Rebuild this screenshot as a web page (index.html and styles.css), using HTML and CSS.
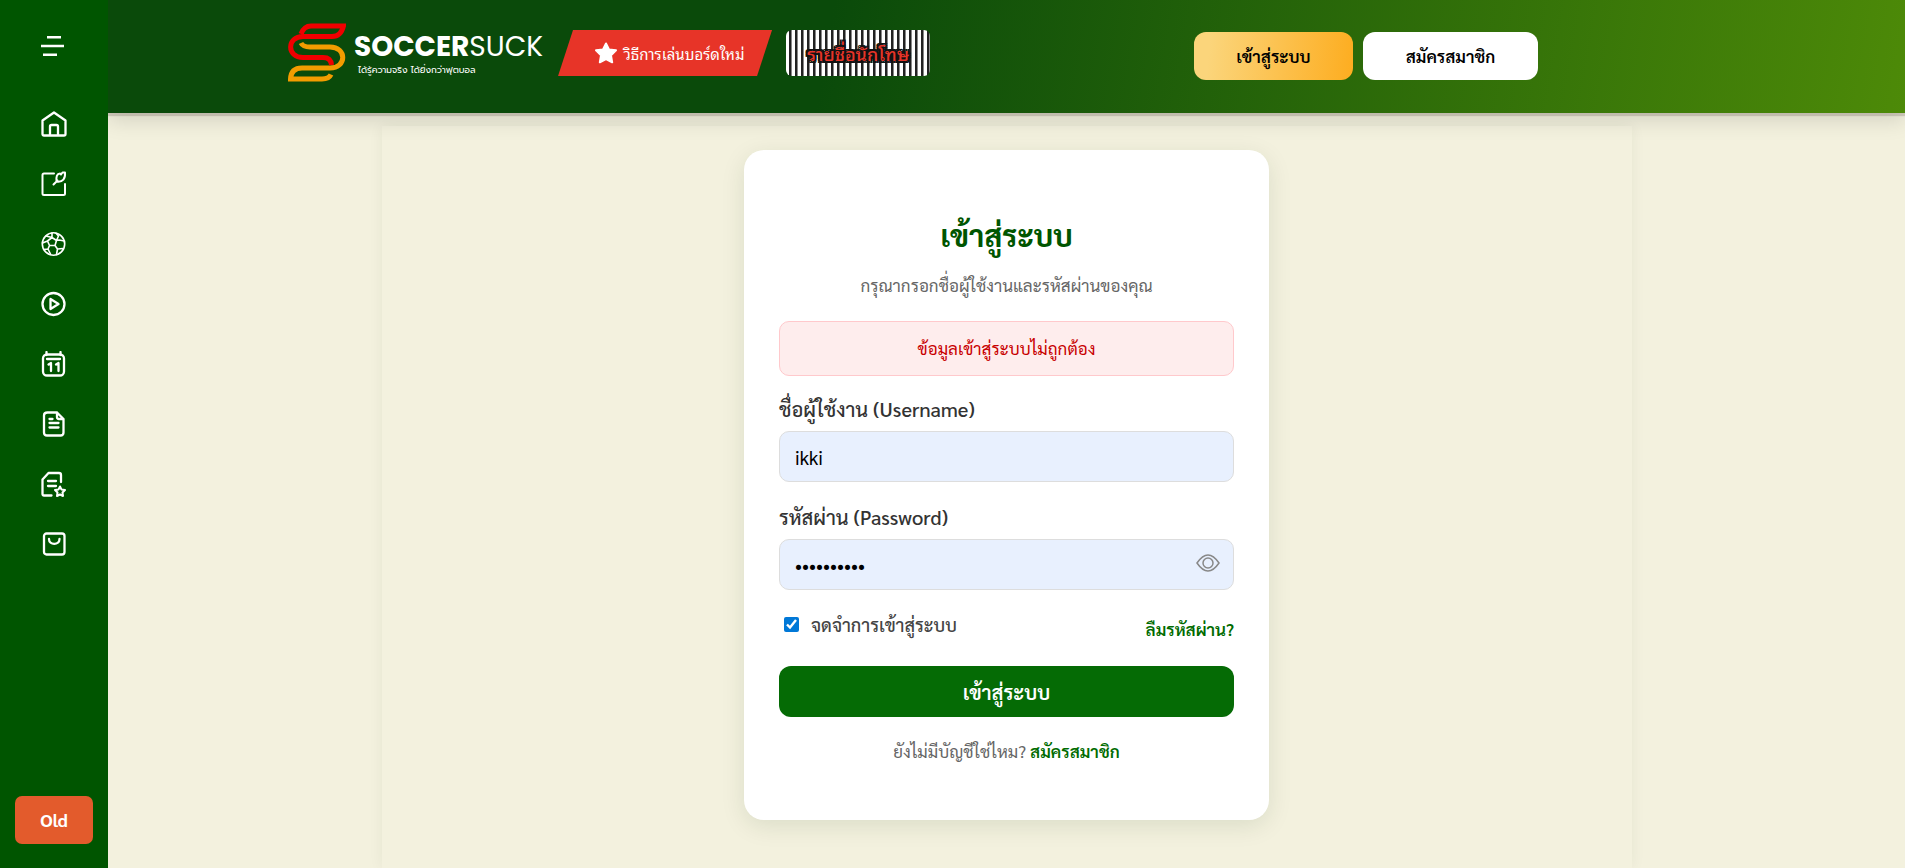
FILE: index.html
```
<!DOCTYPE html>
<html lang="th">
  <head>
    <meta charset="UTF-8" />
    <meta name="viewport" content="width=device-width, initial-scale=1.0" />
    <title>เข้าสู่ระบบ - Soccersuck</title>
    <link rel="stylesheet" href="styles.css">
  </head>
  <body>
    <aside class="sidebar">
      <button class="menu-toggle" aria-label="เมนู">
        <svg width="24" height="20" viewBox="0 0 24 20" stroke="#fff" stroke-width="2.5"><path d="M7 1.300h14M1 10h23M3 18.700h14"/></svg>
      </button>
      <nav class="side-nav">
        <a href="#" aria-label="หน้าแรก">
          <svg class="icon" viewBox="0 0 26 26"><path d="M1.500 9.500L13 1.500l11.500 8V23q0 1.500-1.500 1.500H3q-1.500 0-1.500-1.500zM9 24V15.500q0-1.500 1.500-1.500h5q1.500 0 1.500 1.500V24"/></svg>
        </a>
        <a href="#" aria-label="เว็บบอร์ด">
          <svg class="icon thin" viewBox="0 0 26 26"><path d="M13 2.500H3q-1.500 0-1.500 1.500v18.500q0 1.500 1.500 1.500h19.500q1.500 0 1.500-1.500V13M12.500 13.500l4-4M15.500 10.500c-.5-5 .5-8 3.500-8l1 1 1.500-2h2.500c.5 6-2 10-8.500 9z"/></svg>
        </a>
        <a href="#" aria-label="ฟุตบอล">
          <svg class="icon ball" viewBox="0 0 26 26"><circle cx="12.500" cy="13" r="11.200"/><path d="M11 6.500l4.500 3-1.500 5H8.500L6.500 10zM11 6.500V2M11 6.500L5 5M15.500 9.500l2-4.500M17.500 5L15 2.300M14 14.500l2.500 3.500M8.500 14.500L7 18M6.500 10L1.500 12M16.500 18l5.500-.500M16.500 18l-1 5.500M7 18l-4 .500M7 18l2.500 5M15.500 9.500L18 9l5.500 1"/></svg>
        </a>
        <a href="#" aria-label="วิดีโอ">
          <svg class="icon" viewBox="0 0 26 26"><circle cx="12.500" cy="13" r="11"/><path d="M9.500 8v10l8-5z"/></svg>
        </a>
        <a href="#" aria-label="ตารางแข่ง">
          <svg class="icon" viewBox="0 0 26 26"><rect x="2" y="3.500" width="21" height="21" rx="4"/><path d="M5.500 1v3M19.500 1v3M6 8h13"/><path d="M7.500 13.500l2.500-1.500v8M15 13.500l2.500-1.500v8"/></svg>
        </a>
        <a href="#" aria-label="ข่าว">
          <svg class="icon" viewBox="0 0 26 26"><path d="M16 1.500H6.500Q3 1.500 3 4.500v17q0 3 3 3h13.500q3 0 3-3V8zM16 1.500V6q0 2 2 2h4M8.500 8h3M8.500 12h9M8.500 16.500h9"/></svg>
        </a>
        <a href="#" aria-label="รายการโปรด">
          <svg class="icon" viewBox="0 0 26 26"><path d="M10.500 24.500H3q-1.500 0-1.500-1.500V8.500l6-6.500H18q2 0 2 2v7M7 10h8M7 15h8"/><path class="fine" d="M19 15.500l1.500 3 3.500.500-2.500 2.500.5 3.500-3-1.500-3 1.500.5-3.500-2.500-2.500 3.500-.500z"/></svg>
        </a>
        <a href="#" aria-label="ร้านค้า">
          <svg class="icon" viewBox="0 0 26 26"><rect x="3" y="2.500" width="20.500" height="21" rx="2.500"/><path d="M8 8c0 6.500 10.500 6.500 10.500 0"/></svg>
        </a>
      </nav>
      <a href="#" class="old-button">Old</a>
    </aside>

    <div class="page">
      <header class="header">
        <div class="header-inner">
          <div class="header-links">
            <a href="#" class="logo">
              <svg class="logo-mark" viewBox="0 0 58 60" fill="none" stroke-width="5">
                <path stroke="#f39c00" d="M13 20q2 4 9 4h20c17 0 17 21 0 21H14Q3 45 2.500 56H34q7 0 9-4.500"/>
                <path stroke="#f00000" d="M13 11q3-8 10-8h32.500Q53 13.500 44 13.500H15c-16.500 0-16.500 21 0 21h20q8 0 8.500 7.500"/>
              </svg>
              <span class="logo-text">
                <span class="logo-name"><b>SOCCER</b>SUCK</span>
                <span class="logo-tagline">ได้รู้ความจริง ได้ยิ่งกว่าฟุตบอล</span>
              </span>
            </a>
            <a href="#" class="guide-link">
              <svg width="24" height="22" viewBox="0 0 24 22" fill="#fff" stroke="#fff" stroke-width="2" stroke-linejoin="round"><path d="M12 1.500l3 6 7 .8-5 5 1.200 7L12 17l-6.200 3.300 1.200-7-5-5 7-.8z"/></svg>
              <span>วิธีการเล่นบอร์ดใหม่</span>
            </a>
            <a href="#" class="prisoner-link">รายชื่อนักโทษ</a>
          </div>
          <div class="header-buttons">
            <button class="header-login">เข้าสู่ระบบ</button>
            <button class="header-register">สมัครสมาชิก</button>
          </div>
        </div>
      </header>

      <main class="content">
        <form class="login-card">
          <h1 class="login-title">เข้าสู่ระบบ</h1>
          <p class="login-subtitle">กรุณากรอกชื่อผู้ใช้งานและรหัสผ่านของคุณ</p>
          <div class="login-error">ข้อมูลเข้าสู่ระบบไม่ถูกต้อง</div>

          <label class="field-label" for="username">ชื่อผู้ใช้งาน (Username)</label>
          <input class="field-input" type="text" id="username" value="ikki" />

          <label class="field-label" for="password">รหัสผ่าน (Password)</label>
          <div class="password-box">
            <input class="field-input" type="password" id="password" value="1234567890" />
            <button type="button" class="show-password" aria-label="แสดงรหัสผ่าน">
              <svg width="24" height="18" viewBox="0 0 24 18" fill="none" stroke="#888" stroke-width="1.500"><path d="M1 9q11-16 22 0-11 16-22 0z"/><circle cx="12" cy="9" r="5"/></svg>
            </button>
          </div>

          <div class="login-options">
            <label class="remember"><input type="checkbox" checked />จดจำการเข้าสู่ระบบ</label>
            <a href="#" class="forgot">ลืมรหัสผ่าน?</a>
          </div>

          <button type="submit" class="login-submit">เข้าสู่ระบบ</button>
          <p class="register-text">ยังไม่มีบัญชีใช่ไหม? <a href="#">สมัครสมาชิก</a></p>
        </form>
      </main>
    </div>
  </body>
</html>
```

FILE: styles.css
```
* {
  box-sizing: border-box;
}
body {
  display: flex;
  min-height: 100vh;
  margin: 0;
  font-family: Sarabun, "Noto Sans Thai", "Open Sans", sans-serif;
  font-size: 17px;
  background: #f3f1de;
}
a {
  text-decoration: none;
}
button {
  border: 0;
  font-family: inherit;
  cursor: pointer;
}

/* sidebar */
.sidebar {
  position: relative;
  z-index: 1;
  display: flex;
  flex-direction: column;
  align-items: center;
  flex: 0 0 108px;
  padding: 36px 0 24px;
  background: #005500;
}
.menu-toggle {
  display: flex;
  padding: 0;
  margin-right: 4px;
  background: none;
}
.side-nav {
  display: flex;
  flex-direction: column;
  gap: 34px;
  margin-top: 55px;
}
.side-nav a {
  display: flex;
}
.icon {
  width: 26px;
  height: 26px;
  fill: none;
  stroke: #fff;
  stroke-width: 2.3;
  stroke-linecap: round;
  stroke-linejoin: round;
}
.icon.thin {
  stroke-width: 2;
}
.icon.ball {
  stroke-width: 1.6;
}
.icon .fine {
  stroke-width: 2;
}
.old-button {
  width: 78px;
  margin-top: auto;
  border-radius: 7px;
  background: #e35b2c;
  color: #fff;
  font-size: 18px;
  font-weight: bold;
  line-height: 48px;
  text-align: center;
}

/* header */
.page {
  display: flex;
  flex-direction: column;
  flex: 1;
}
.header {
  position: relative;
  background: linear-gradient(100deg, #0a4a0a 40%, #4d8a08);
  box-shadow: 0 3px 1px rgba(80, 60, 60, 0.2), 0 8px 20px rgba(0, 0, 0, 0.12);
}
.header-inner {
  display: flex;
  align-items: center;
  max-width: 1250px;
  height: 113px;
  margin-left: 180px;
  padding-bottom: 2px;
}
.header-links {
  display: flex;
  align-items: center;
  padding-bottom: 5px;
}
.logo {
  display: flex;
  gap: 8px;
  color: #fff;
}
.logo-mark {
  width: 58px;
  height: 60px;
}
.logo-text {
  display: flex;
  flex-direction: column;
  padding-top: 8px;
}
.logo-name {
  font-family: Poppins, Lato, sans-serif;
  font-size: 28px;
  line-height: 32px;
}
.logo-tagline {
  padding-left: 4px;
  font-family: Prompt, Kanit, "Noto Sans Thai", Sarabun, sans-serif;
  font-size: 9px;
  line-height: 14px;
}
.guide-link {
  display: flex;
  align-items: center;
  justify-content: center;
  gap: 6px;
  width: 214px;
  height: 46px;
  margin-left: 15px;
  padding-left: 8px;
  background: #e73428;
  clip-path: polygon(7% 0, 100% 0, 93% 100%, 0 100%);
  color: #fff;
  font-family: "Noto Sans Thai Looped", Sarabun, sans-serif;
  font-size: 15px;
}
.prisoner-link {
  width: 144px;
  margin-left: 14px;
  border-radius: 6px;
  background: repeating-linear-gradient(90deg, #fff 0 3px, #222 3px 5px, #888 5px 6px);
  color: #e73428;
  font-family: "Noto Sans Thai Looped", Sarabun, sans-serif;
  font-size: 18px;
  font-weight: 500;
  line-height: 46px;
  text-align: center;
  text-shadow: 2px 0 #111, -2px 0 #111, 0 2px #111, 0 -2px #111, 2px 2px #111, -2px 2px #111, 2px -2px #111, -2px -2px #111;
}
.header-buttons {
  display: flex;
  gap: 10px;
  margin-left: auto;
}
.header-buttons button {
  height: 48px;
  border-radius: 12px;
  font-size: 17px;
  font-weight: 600;
}
.header-login {
  width: 159px;
  background: linear-gradient(95deg, #fbd57b 10%, #fdad20);
}
.header-register {
  width: 175px;
  background: #fff;
}

/* login form */
.content {
  flex: 1;
  width: 100%;
  max-width: 1250px;
  margin: 13px auto 0;
  padding: 24px 0 48px;
  box-shadow: 0 0 14px rgba(0, 50, 0, 0.06);
}
.login-card {
  max-width: 525px;
  margin: 0 auto;
  padding: 63px 35px 56px;
  border-radius: 20px;
  background: #fff;
  box-shadow: 0 6px 24px rgba(0, 50, 0, 0.1);
}
.login-title {
  margin: 0;
  color: #005500;
  font-size: 30px;
  line-height: 44px;
  text-align: center;
}
.login-subtitle {
  margin: 15px 0 23px;
  color: #666;
  line-height: 26px;
  text-align: center;
}
.login-error {
  margin-bottom: 20px;
  padding: 14px;
  border: 1px solid #ffc9cc;
  border-radius: 10px;
  background: #feeded;
  color: #c80000;
  line-height: 25px;
  text-align: center;
}
.field-label {
  display: block;
  margin-bottom: 9px;
  color: #333;
  font-size: 20px;
  font-weight: 500;
  line-height: 26px;
}
.field-input {
  display: block;
  width: 100%;
  height: 51px;
  margin-bottom: 22px;
  padding: 0 15px;
  border: 1px solid #ddd;
  border-radius: 10px;
  background: #e8f0fe;
  font-family: inherit;
  font-size: 19px;
}
.password-box {
  position: relative;
}
.show-password {
  position: absolute;
  top: 15px;
  right: 14px;
  padding: 0;
  background: none;
}
.login-options {
  display: flex;
  align-items: flex-start;
  justify-content: space-between;
  margin-bottom: 24px;
  line-height: 26px;
}
.remember {
  display: flex;
  align-items: center;
  gap: 12px;
  color: #444;
  font-size: 18px;
  font-weight: 500;
}
.remember input {
  width: 15px;
  height: 15px;
  margin: 0 0 2px 5px;
  accent-color: #0078d7;
}
.forgot {
  padding-top: 4px;
}
.forgot,
.register-text a {
  color: #006b00;
  font-weight: 600;
}
.login-submit {
  display: block;
  width: 100%;
  height: 51px;
  border-radius: 12px;
  background: #056b05;
  color: #fff;
  font-size: 20px;
  font-weight: 600;
}
.register-text {
  margin: 21px 0 0;
  color: #666;
  line-height: 26px;
  text-align: center;
}
```
